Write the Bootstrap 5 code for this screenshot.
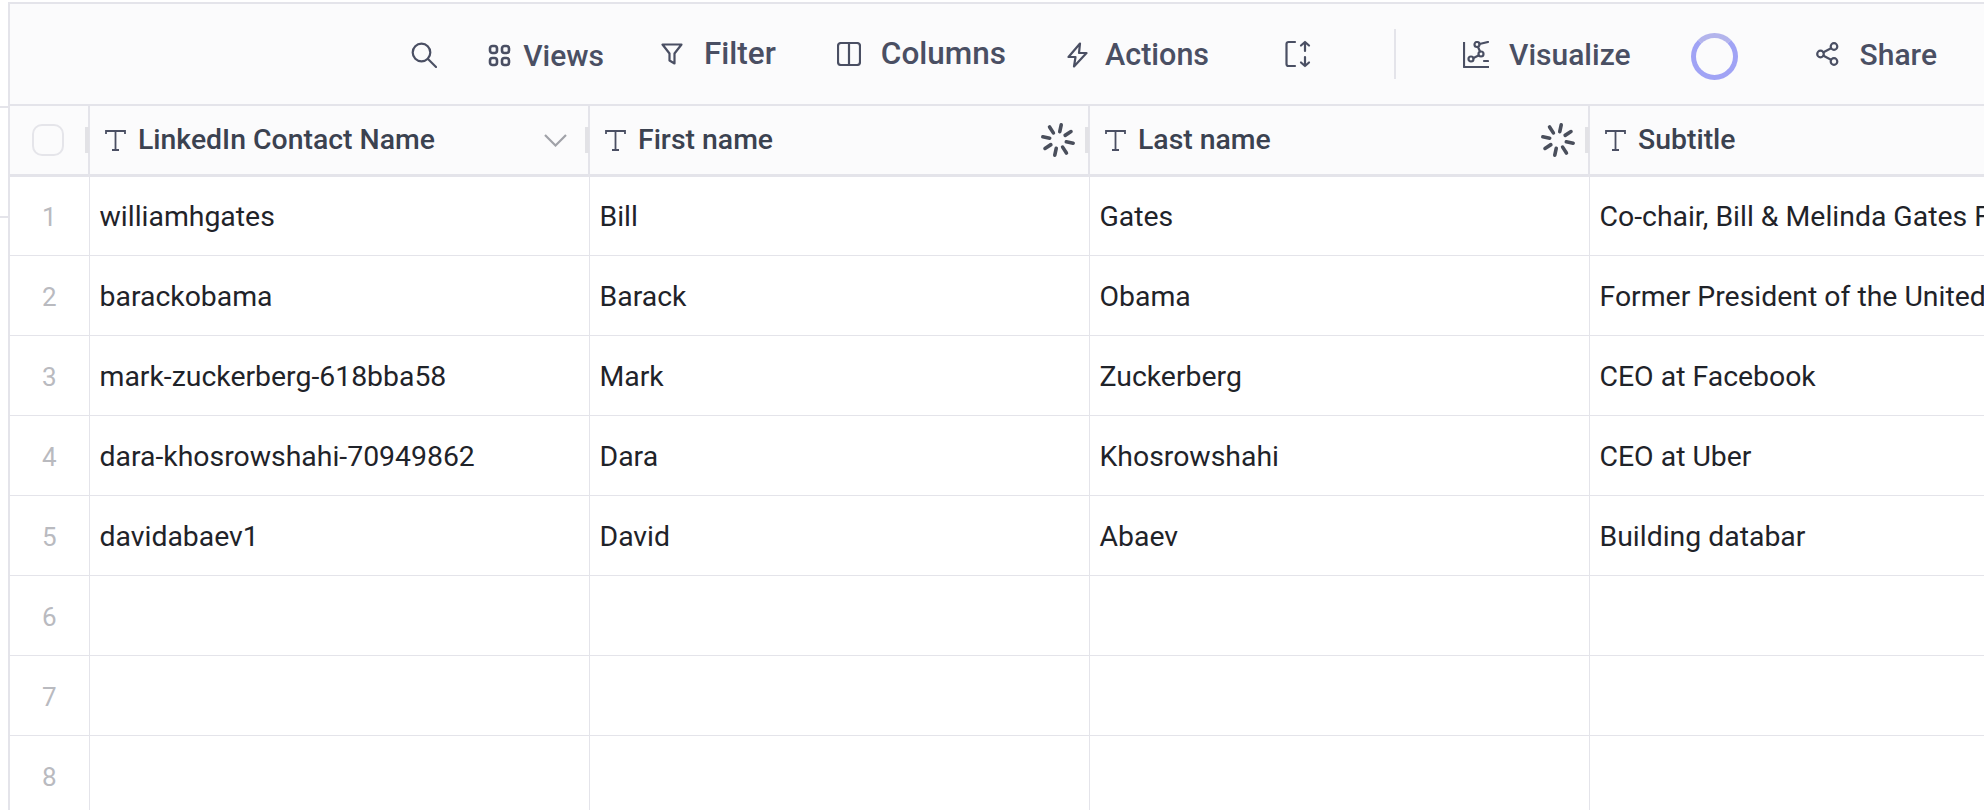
<!DOCTYPE html>
<html lang="en">
<head>
    <meta charset="UTF-8">
    <meta name="viewport" content="width=device-width, initial-scale=1.0">
    <title>LinkedIn Contacts</title>
    <link href="https://cdn.jsdelivr.net/npm/bootstrap@5.3.3/dist/css/bootstrap.min.css" rel="stylesheet">
    <style>
        html, body { height: 100%; }
        body {
            background-color: #fff;
            font-family: "Roboto", "Liberation Sans", sans-serif;
            color: #1f2329;
            overflow: hidden;
        }
        .side-strip { width: 8px; flex: none; }
        .strip-line { height: 2px; background: #e4e4ea; }
        .strip-first { margin-top: 106px; }
        .strip-second { margin-top: 108px; }
        .sheet { border-left: 2px solid #e4e4ea; border-top: 2px solid #e4e4ea; margin-top: 2px; min-width: 0; }
        .tool-bar {
            height: 100px;
            padding-right: 47px;
            background: #fbfbfc;
            color: #4a4f63;
            font-size: 30px;
            font-weight: 500;
        }
        .tool-item { display: flex; align-items: center; gap: 20px; }
        .tool-item svg { flex: none; fill: none; stroke: currentColor; stroke-width: 2.2; stroke-linecap: round; stroke-linejoin: round; }
        .tool-raised { font-size: 31.5px; }
        .tool-lowered { margin-top: 2px; }
        .views-item { gap: 12px; margin-left: 51px; }
        .filter-item { gap: 21px; margin-left: 57px; }
        .columns-item { margin-left: 61px; }
        .actions-item { gap: 17px; margin-left: 61px; font-size: 30.5px; }
        .expand-item { margin-left: 76px; }
        .tool-divider { width: 2px; height: 50px; background: #e4e4ea; margin: 0 67px 0 83px; }
        .load-ring {
            width: 47px; height: 47px; margin: 4px 78px 0 60px;
            border: 5px solid #a0a3f5; border-top-color: #b3b4ec; border-radius: 50%;
        }
        .share-item { gap: 21px; }
        .sheet-table { table-layout: fixed; width: 2079px; border-collapse: collapse; margin: 0; font-size: 28.4px; }
        .sheet-table th, .sheet-table td { padding: 0; border: 0 solid #e4e4ea; }
        .sheet-table th {
            height: 70px;
            background: #fbfbfc;
            border-top-width: 2px;
            border-bottom-width: 3px;
            border-right-width: 2px;
            color: #3b4250;
            font-size: 28.4px;
            font-weight: 500;
        }
        .sheet-table td { height: 80px; border-bottom-width: 1.5px; border-right-width: 1.5px; font-weight: 400; padding: 4px 0 0 10px; }
        .sheet-table td.row-num { color: #b9babf; text-align: center; padding: 4px 0 0; font-size: 26px; }
        .col-num { width: 79px; }
        .col-data { width: 500px; }
        .head-cell { display: flex; align-items: center; height: 100%; padding: 0 12px 0 15px; position: relative; }
        .head-cell svg.type-icon { flex: none; margin-right: 12px; fill: none; stroke: #4a4f63; stroke-width: 1.8; }
        .head-label { padding-top: 2px; }
        .head-cell .head-end { margin-left: auto; flex: none; }
        .head-cell .chevron-end { margin-right: 8px; }
        .resize-grip { position: absolute; right: -1px; top: 21px; width: 4px; height: 26px; background: #e2e2e6; }
        .row-check { display: block; width: 32px; height: 32px; margin-left: 22px; border: 2.5px solid #e5e5ea; border-radius: 10px; }
    </style>
</head>
<body class="d-flex">
    <div class="side-strip">
        <div class="strip-line strip-first"></div>
        <div class="strip-line strip-second"></div>
    </div>
    <div class="sheet flex-grow-1 overflow-hidden">
        <div class="tool-bar d-flex align-items-center justify-content-end">
            <div class="tool-item tool-lowered">
                <svg width="26" height="26" viewBox="0 0 26 26" stroke-width="2.6"><circle cx="10.500" cy="10.500" r="8.800"/><path d="M17 17l8 8"/></svg>
            </div>
            <div class="tool-item views-item tool-lowered">
                <svg width="23" height="23" viewBox="0 0 23 23"><rect x="2" y="2" width="7" height="7" rx="2.500" stroke-width="2.600"/><rect x="14" y="2" width="7" height="7" rx="2.500" stroke-width="2.600"/><rect x="2" y="14" width="7" height="7" rx="2.500" stroke-width="2.600"/><rect x="14" y="14" width="7" height="7" rx="2.500" stroke-width="2.600"/></svg>
                <span>Views</span>
            </div>
            <div class="tool-item filter-item tool-raised">
                <svg width="22" height="22" viewBox="0 0 22 22"><path d="M1.500 1.500h19l-7 9v10l-5-3v-7z"/></svg>
                <span>Filter</span>
            </div>
            <div class="tool-item columns-item tool-raised">
                <svg width="24" height="24" viewBox="0 0 24 24"><rect x="1" y="1" width="22" height="22" rx="3"/><path d="M12 1v22"/></svg>
                <span>Columns</span>
            </div>
            <div class="tool-item actions-item tool-lowered">
                <svg width="21" height="26" viewBox="0 0 21 26"><path d="M13 1.500L1.500 15h7l-1.500 9.500L19.500 11h-7.500z"/></svg>
                <span>Actions</span>
            </div>
            <div class="tool-item expand-item">
                <svg width="26" height="28" viewBox="0 0 26 28"><path d="M10 2H3.500A2 2 0 0 0 1.500 4v20a2 2 0 0 0 2 2H10"/><path d="M20 2v9M16 5.500L20 2l4 3.500M20 17v9M16 22.500L20 26l4-3.500"/></svg>
            </div>
            <div class="tool-divider"></div>
            <div class="tool-item">
                <svg width="26" height="27" viewBox="0 0 26 27"><path d="M1 1v25h25" stroke-linecap="butt"/><circle cx="8" cy="18" r="2.500"/><circle cx="18" cy="13" r="2.500"/><circle cx="14" cy="3.500" r="2.500"/><path d="M10.500 17l5-2.500M17 10.500L15 6M16.500 3L25 1M21 20h4"/></svg>
                <span>Visualize</span>
            </div>
            <div class="load-ring"></div>
            <div class="tool-item share-item">
                <svg width="23" height="24" viewBox="0 0 23 24"><circle cx="4.500" cy="12" r="3.300"/><circle cx="18" cy="4.500" r="3.300"/><circle cx="18" cy="19.500" r="3.300"/><path d="M7.500 10.300l7.500-4M7.500 13.700l7.500 4"/></svg>
                <span>Share</span>
            </div>
        </div>
        <table class="sheet-table">
            <colgroup>
                <col class="col-num"><col class="col-data"><col class="col-data"><col class="col-data"><col class="col-data">
            </colgroup>
            <thead id="sheetHead"></thead>
            <tbody id="sheetBody"></tbody>
        </table>
    </div>

<script>
    const typeIcon = '<svg class="type-icon" width="21" height="22" viewBox="0 0 21 22"><path d="M1 5V2h19v3M10.500 2v19M7 21h7"/></svg>';
    const chevron = '<svg class="head-end chevron-end" width="25" height="14" viewBox="0 0 25 14" fill="none" stroke="#a0a2a8" stroke-width="2.200"><path d="M2 2l10.500 10.500L23 2"/></svg>';
    const spinner = '<svg class="head-end" width="36" height="36" viewBox="0 0 36 36" stroke="#4a4f5c" stroke-width="3.600" stroke-linecap="round">'
        + [0, 1, 2, 3, 4, 5, 6, 7].map(i => `<path d="M18 2.500v7" transform="rotate(${12 + i * 45} 18 18)"/>`).join('')
        + '</svg>';

    const columns = [
        { name: 'LinkedIn Contact Name', end: chevron },
        { name: 'First name', end: spinner },
        { name: 'Last name', end: spinner },
        { name: 'Subtitle', end: '' }
    ];
    const rows = [
        ['williamhgates', 'Bill', 'Gates', 'Co-chair, Bill &amp; Melinda Gates Foundation'],
        ['barackobama', 'Barack', 'Obama', 'Former President of the United States of America'],
        ['mark-zuckerberg-618bba58', 'Mark', 'Zuckerberg', 'CEO at Facebook'],
        ['dara-khosrowshahi-70949862', 'Dara', 'Khosrowshahi', 'CEO at Uber'],
        ['davidabaev1', 'David', 'Abaev', 'Building databar'],
        ['', '', '', ''], ['', '', '', ''], ['', '', '', '']
    ];

    document.getElementById('sheetHead').innerHTML = '<tr><th><div class="head-cell p-0"><span class="row-check"></span><span class="resize-grip"></span></div></th>'
        + columns.map(c => `<th><div class="head-cell">${typeIcon}<span class="head-label">${c.name}</span>${c.end}<span class="resize-grip"></span></div></th>`).join('')
        + '</tr>';
    document.getElementById('sheetBody').innerHTML = rows.map((r, i) =>
        `<tr><td class="row-num">${i + 1}</td>` + r.map(v => `<td class="text-nowrap overflow-hidden">${v}</td>`).join('') + '</tr>'
    ).join('');
</script>
<script src="https://cdn.jsdelivr.net/npm/bootstrap@5.3.3/dist/js/bootstrap.bundle.min.js"></script>
</body>
</html>
